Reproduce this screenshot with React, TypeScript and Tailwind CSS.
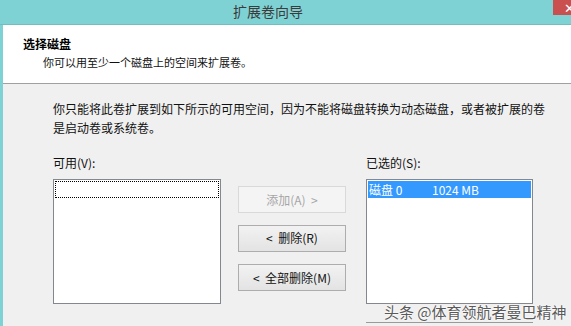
import React from "react";

const font = { fontFamily: '"Noto Sans CJK SC", "Noto Sans", sans-serif' };

function Btn({ children, disabled }: { children: React.ReactNode; disabled?: boolean }) {
  return (
    <button
      disabled={disabled}
      className={`h-[27px] w-[108px] border text-[12px] leading-none ${
        disabled
          ? "border-[#d9d9d9] bg-[#f4f4f4] text-[#a6a6a6]"
          : "border-[#adadad] bg-gradient-to-b from-[#f2f2f2] to-[#e3e3e3] text-[#111]"
      }`}
    >
      {children}
    </button>
  );
}

export default function App() {
  return (
    <div className="relative h-[326px] w-[571px] overflow-hidden bg-[#f0f0f0]" style={font}>
      {/* Title bar */}
      <div className="flex h-[25px] items-start border-b border-[#6fbfc0] bg-[#7fd2d3]">
        <div className="pl-[233px] pt-[1px] text-[14px] leading-[20px] text-[#3c3c3c]">扩展卷向导</div>
        <div className="flex-1" />
        <div className="flex h-[15px] w-[18px] items-center overflow-hidden bg-[#c9504f] pl-[11px] text-[13px] leading-none text-white">
          ✕
        </div>
      </div>

      <div className="flex">
        <div className="w-[3px] shrink-0 self-stretch bg-[#7fd2d3]" />
        <div className="flex-1">
          {/* Header */}
          <div className="h-[59px] border-b border-[#a0a0a0] bg-white pl-[20px] pt-[11px]">
            <div className="text-[12px] font-bold leading-[16px] text-black">选择磁盘</div>
            <div className="pl-[20px] pt-[2px] text-[11px] leading-[16px] text-[#111]">
              你可以用至少一个磁盘上的空间来扩展卷。
            </div>
          </div>

          {/* Body */}
          <div className="pl-[50px] pt-[15px]">
            <p className="text-[12px] leading-[19px] text-[#111]">
              你只能将此卷扩展到如下所示的可用空间，因为不能将磁盘转换为动态磁盘，或者被扩展的卷
              <br />
              是启动卷或系统卷。
            </p>

            <div className="mt-[18px] flex items-start">
              <div className="w-[168px]">
                <div className="h-[16px] text-[12px] leading-[16px] text-[#111]">可用(V):</div>
                <div className="mt-[8px] h-[125px] border border-[#828790] bg-white p-px">
                  <div className="h-[17px] border border-dotted border-black" />
                </div>
              </div>

              <div className="ml-[17px] mt-[31px] flex w-[108px] flex-col">
                <Btn disabled>添加(A)&nbsp;&nbsp;&gt;</Btn>
                <div className="mt-[11px]">
                  <Btn>&lt;&nbsp;&nbsp;删除(R)</Btn>
                </div>
                <div className="mt-[12px]">
                  <Btn>&lt;&nbsp;&nbsp;全部删除(M)</Btn>
                </div>
              </div>

              <div className="ml-[20px] w-[167px]">
                <div className="h-[16px] text-[12px] leading-[16px] text-[#111]">已选的(S):</div>
                <div className="mt-[8px] h-[125px] border border-[#828790] bg-white p-px">
                  <div className="flex h-[17px] items-center bg-[#3399ff] text-[12px] leading-none text-white">
                    <span className="w-[64px] pl-[1px]">磁盘 0</span>
                    <span>1024 MB</span>
                  </div>
                </div>
                <div className="mt-[18px] h-[4px] border-t border-[#9a9a9a]" />
              </div>
            </div>
          </div>
        </div>
      </div>

      {/* Watermark */}
      <div
        className="absolute left-[384px] top-[302px] text-[15px] leading-[20px] text-[#5a5a5a]"
        style={{ textShadow: "0 0 2px #fff, 0 0 2px #fff" }}
      >
        头条 @体育领航者曼巴精神
      </div>
    </div>
  );
}
